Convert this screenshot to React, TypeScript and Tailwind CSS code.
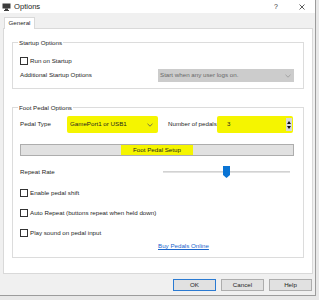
import React from "react";

function Check({ label }: { label: string }) {
  return (
    <div className="h-[12px] flex items-center">
      <div className="w-[8px] h-[8px] border border-[#333] bg-white shrink-0" />
      <span className="ml-[2px]">{label}</span>
    </div>
  );
}

function Chevron({ color = "#666" }: { color?: string }) {
  return (
    <svg width="6" height="4" viewBox="0 0 6 4">
      <path d="M0.5 0.8 L3 3.2 L5.5 0.8" fill="none" stroke={color} strokeWidth="0.8" />
    </svg>
  );
}

export default function App() {
  return (
    <div className="w-[319px] h-[300px] bg-[#e8e8e8] overflow-hidden font-['Liberation_Sans',Arial,sans-serif] text-[6.2px] text-[#1e1e1e] leading-none">
      <div className="w-[316px] h-[296px] bg-[#f0f0f0] border-r border-b border-[#9c9c9c] flex flex-col">
        {/* Title bar */}
        <div className="h-[13px] bg-white flex items-center shrink-0">
          <svg className="ml-[2px]" width="9" height="8" viewBox="0 0 9 8">
            <rect x="0.5" y="0.5" width="8" height="5" fill="#3c3c3c" />
            <rect x="3" y="5.5" width="3" height="1.5" fill="#3c3c3c" />
            <rect x="2" y="7" width="5" height="1" fill="#3c3c3c" />
          </svg>
          <span className="ml-[3px] text-[7.6px] text-[#222]">Options</span>
          <span className="ml-auto text-[7px] text-[#333] mr-[21px]">?</span>
          <svg className="mr-[10px]" width="6" height="6" viewBox="0 0 6 6">
            <path d="M0.5 0.5 L5.5 5.5 M5.5 0.5 L0.5 5.5" stroke="#333" strokeWidth="0.8" />
          </svg>
        </div>

        {/* Tab header */}
        <div className="mt-[4px] ml-[4px] w-[31px] h-[12px] bg-white border-t border-l border-r border-[#d9d9d9] flex items-center justify-center -mb-px relative z-10">
          General
        </div>

        {/* Tab panel */}
        <div className="ml-[3px] w-[310px] h-[246px] bg-white border border-[#d9d9d9] flex flex-col shrink-0">
          {/* Startup Options */}
          <div className="relative mt-[13px] mx-[8px] h-[47px] border border-[#dcdcdc] pt-[12px] pl-[7px] pr-[9px] flex flex-col">
            <span className="absolute left-[5px] top-[-4px] bg-white px-[1px] leading-[7px]">Startup Options</span>
            <Check label="Run on Startup" />
            <div className="mt-[2px] h-[13px] flex items-center">
              <span>Additional Startup Options</span>
              <div className="ml-auto w-[136px] shrink-0 h-[13px] bg-[#cccccc] flex items-center pl-[2px] pr-[3px] text-[#6a6a6a]">
                <span>Start when any user logs on.</span>
                <span className="ml-auto flex">
                  <Chevron color="#999" />
                </span>
              </div>
            </div>
          </div>

          {/* Foot Pedal Options */}
          <div className="relative mt-[18px] mx-[8px] h-[151px] border border-[#dcdcdc] pt-[8px] pl-[7px] pr-[9px] flex flex-col">
            <span className="absolute left-[5px] top-[-4px] bg-white px-[1px] leading-[7px]">Foot Pedal Options</span>
            <div className="h-[17px] flex items-center">
              <span className="w-[47px] shrink-0">Pedal Type</span>
              <div className="w-[91px] shrink-0 h-[17px] bg-[#f5f500] rounded-[2px] flex items-center pl-[3px] pr-[5px]">
                <span>GamePort1 or USB1</span>
                <span className="ml-auto flex">
                  <Chevron color="#555" />
                </span>
              </div>
              <span className="ml-[10px] w-[48px] shrink-0 whitespace-nowrap">Number of pedals</span>
              <div className="ml-auto mr-[1px] w-[76px] shrink-0 h-[17px] bg-[#f5f500] rounded-[2px] flex items-center pl-[10px]">
                <span>3</span>
                <div className="ml-auto mr-[1px] w-[6px] h-[13px] bg-[#d8d8d8] flex flex-col items-center justify-center gap-[2px]">
                  <svg width="4" height="3" viewBox="0 0 4 3">
                    <path d="M0 3 L2 0 L4 3 Z" fill="#111" />
                  </svg>
                  <svg width="4" height="3" viewBox="0 0 4 3">
                    <path d="M0 0 L2 3 L4 0 Z" fill="#111" />
                  </svg>
                </div>
              </div>
            </div>

            <div className="mt-[11px] h-[12px] bg-[#e1e1e1] border border-[#adadad] flex items-center justify-center">
              <span className="h-[10px] bg-[#f5f500] px-[12px] flex items-center">Foot Pedal Setup</span>
            </div>

            <div className="mt-[10px] h-[12px] flex items-center">
              <span className="w-[143px] shrink-0">Repeat Rate</span>
              <div className="relative w-[127px] shrink-0 h-[12px] flex items-center">
                <div className="w-full h-[2px] bg-[#e2e2e2] border-t border-[#d2d2d2]" />
                <svg className="absolute left-[60px] top-0" width="7" height="12" viewBox="0 0 7 12">
                  <path d="M0 0 H7 V9 L3.5 12 L0 9 Z" fill="#0a74d4" />
                </svg>
              </div>
            </div>

            <div className="mt-[9px]">
              <Check label="Enable pedal shift" />
            </div>
            <div className="mt-[8px]">
              <Check label="Auto Repeat (buttons repeat when held down)" />
            </div>
            <div className="mt-[8px]">
              <Check label="Play sound on pedal input" />
            </div>
            <div className="mt-[1px] h-[12px] flex items-center">
              <span className="ml-[138px] text-[#1a66cc] underline">Buy Pedals Online</span>
            </div>
          </div>
        </div>

        {/* Buttons */}
        <div className="mt-[5px] flex justify-end pr-[3px] gap-[5px]">
          <div className="w-[43px] h-[12px] bg-[#e1e1e1] border border-[#2a7ad2] flex items-center justify-center">OK</div>
          <div className="w-[43px] h-[12px] bg-[#e1e1e1] border border-[#adadad] flex items-center justify-center">Cancel</div>
          <div className="w-[43px] h-[12px] bg-[#e1e1e1] border border-[#adadad] flex items-center justify-center">Help</div>
        </div>
      </div>
    </div>
  );
}
